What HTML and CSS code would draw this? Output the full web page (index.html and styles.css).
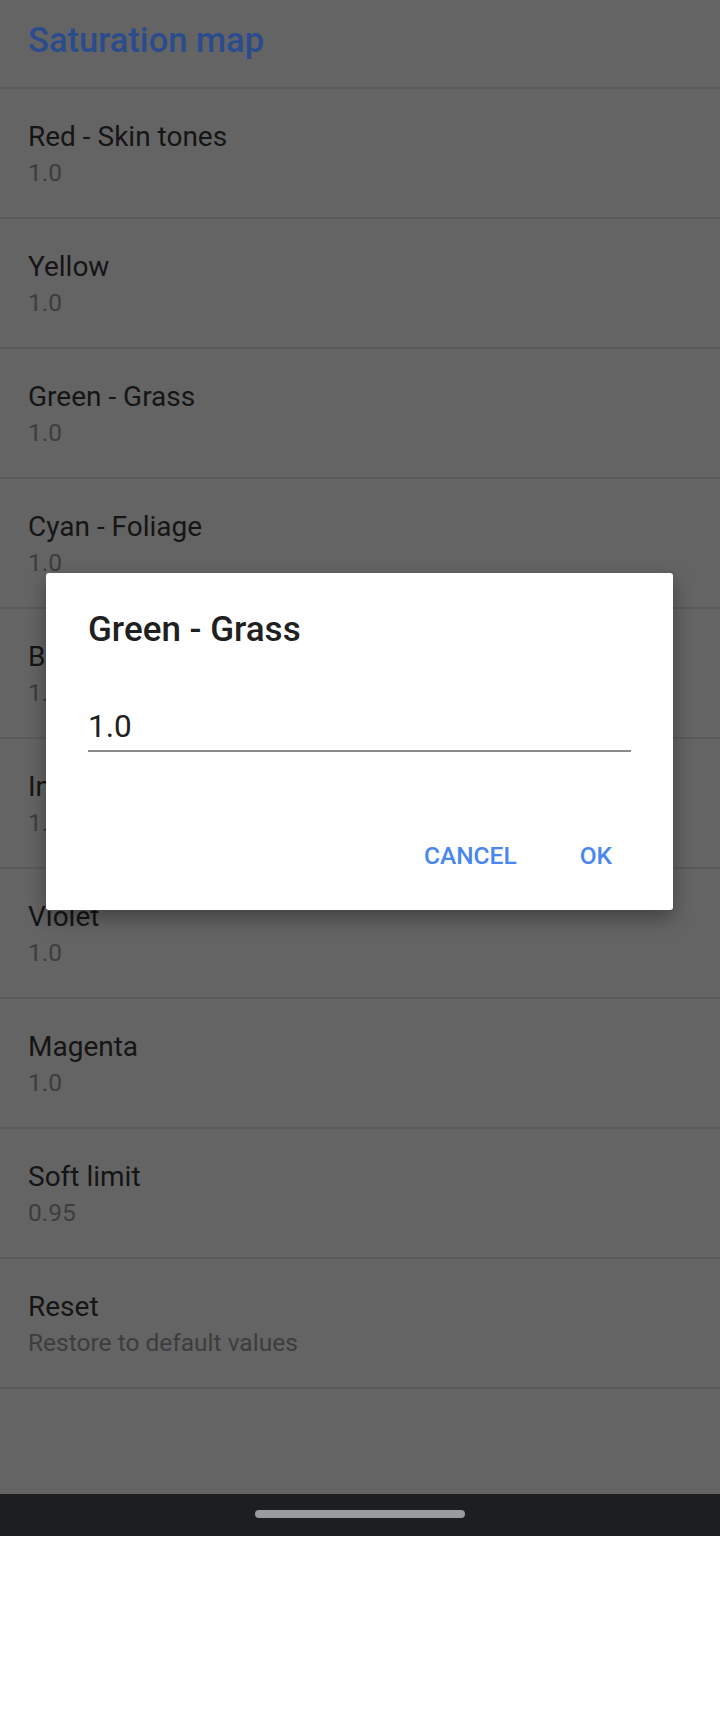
FILE: index.html
```html
<!DOCTYPE html>
<html>
<head>
<meta charset="utf-8">
<link rel="stylesheet" href="styles.css">
</head>
<body>
<div class="screen">
  <header class="appbar">Saturation map</header>
  <ul class="prefs">
    <li class="pref"><div class="pref-title">Red - Skin tones</div><div class="pref-summary">1.0</div></li>
    <li class="pref"><div class="pref-title">Yellow</div><div class="pref-summary">1.0</div></li>
    <li class="pref"><div class="pref-title">Green - Grass</div><div class="pref-summary">1.0</div></li>
    <li class="pref"><div class="pref-title">Cyan - Foliage</div><div class="pref-summary">1.0</div></li>
    <li class="pref"><div class="pref-title">Blue - Sky</div><div class="pref-summary">1.0</div></li>
    <li class="pref"><div class="pref-title">Indigo</div><div class="pref-summary">1.0</div></li>
    <li class="pref"><div class="pref-title">Violet</div><div class="pref-summary">1.0</div></li>
    <li class="pref"><div class="pref-title">Magenta</div><div class="pref-summary">1.0</div></li>
    <li class="pref"><div class="pref-title">Soft limit</div><div class="pref-summary">0.95</div></li>
    <li class="pref"><div class="pref-title">Reset</div><div class="pref-summary">Restore to default values</div></li>
  </ul>
</div>
<div class="navbar"><div class="handle"></div></div>
<div class="below"></div>

<div class="dialog">
  <div class="dialog-title">Green - Grass</div>
  <div class="dialog-input">1.0</div>
  <div class="dialog-buttons">
    <span class="btn">CANCEL</span>
    <span class="btn">OK</span>
  </div>
</div>
</body>
</html>
```
FILE: styles.css
```css
html, body {
  margin: 0;
  padding: 0;
  background: #ffffff;
}
body {
  width: 720px;
  position: relative;
  font-family: Roboto, "Noto Sans", "Liberation Sans", sans-serif;
}
.screen {
  height: 1494px;
  background: #646464;
  overflow: hidden;
}
.appbar {
  height: 81px;
  padding: 0 0 6px 28px;
  line-height: 81px;
  font-size: 34.5px;
  font-weight: 500;
  color: #2a4c8c;
}
.prefs {
  list-style: none;
  margin: 0;
  padding: 0;
  border-bottom: 2px solid #5a5a5a;
}
.pref {
  height: 128px;
  box-sizing: content-box;
  border-top: 2px solid #5a5a5a;
  padding: 0 0 0 28px;
  display: flex;
  flex-direction: column;
}
.pref-title {
  margin-top: 29px;
  font-size: 28px;
  line-height: 37px;
  color: #151515;
}
.pref-summary {
  font-size: 24.5px;
  line-height: 36px;
  color: #3d3d3d;
}
.navbar {
  height: 42px;
  background: #1c1f20;
  display: flex;
  justify-content: center;
  align-items: flex-start;
}
.handle {
  margin-top: 16px;
  width: 210px;
  height: 8px;
  border-radius: 4px;
  background: #9a9d9d;
}
.below {
  height: 176px;
  background: #ffffff;
}
.dialog {
  position: absolute;
  left: 46px;
  top: 573px;
  width: 627px;
  height: 337px;
  box-sizing: border-box;
  padding: 35px 42px 0 42px;
  background: #ffffff;
  border-radius: 3px;
  box-shadow: 0 8px 20px rgba(0, 0, 0, 0.35);
}
.dialog-title {
  font-size: 35px;
  line-height: 44px;
  font-weight: 500;
  color: #202020;
}
.dialog-input {
  margin-top: 55px;
  width: 543px;
  font-size: 31.5px;
  line-height: 40px;
  color: #202020;
  padding-bottom: 3px;
  border-bottom: 2px solid #8a8a8a;
}
.dialog-buttons {
  margin-top: 86px;
  margin-right: 19px;
  display: flex;
  justify-content: flex-end;
  gap: 63px;
}
.btn {
  font-size: 24.5px;
  line-height: 36px;
  font-weight: 500;
  color: #4a86f0;
}
```
